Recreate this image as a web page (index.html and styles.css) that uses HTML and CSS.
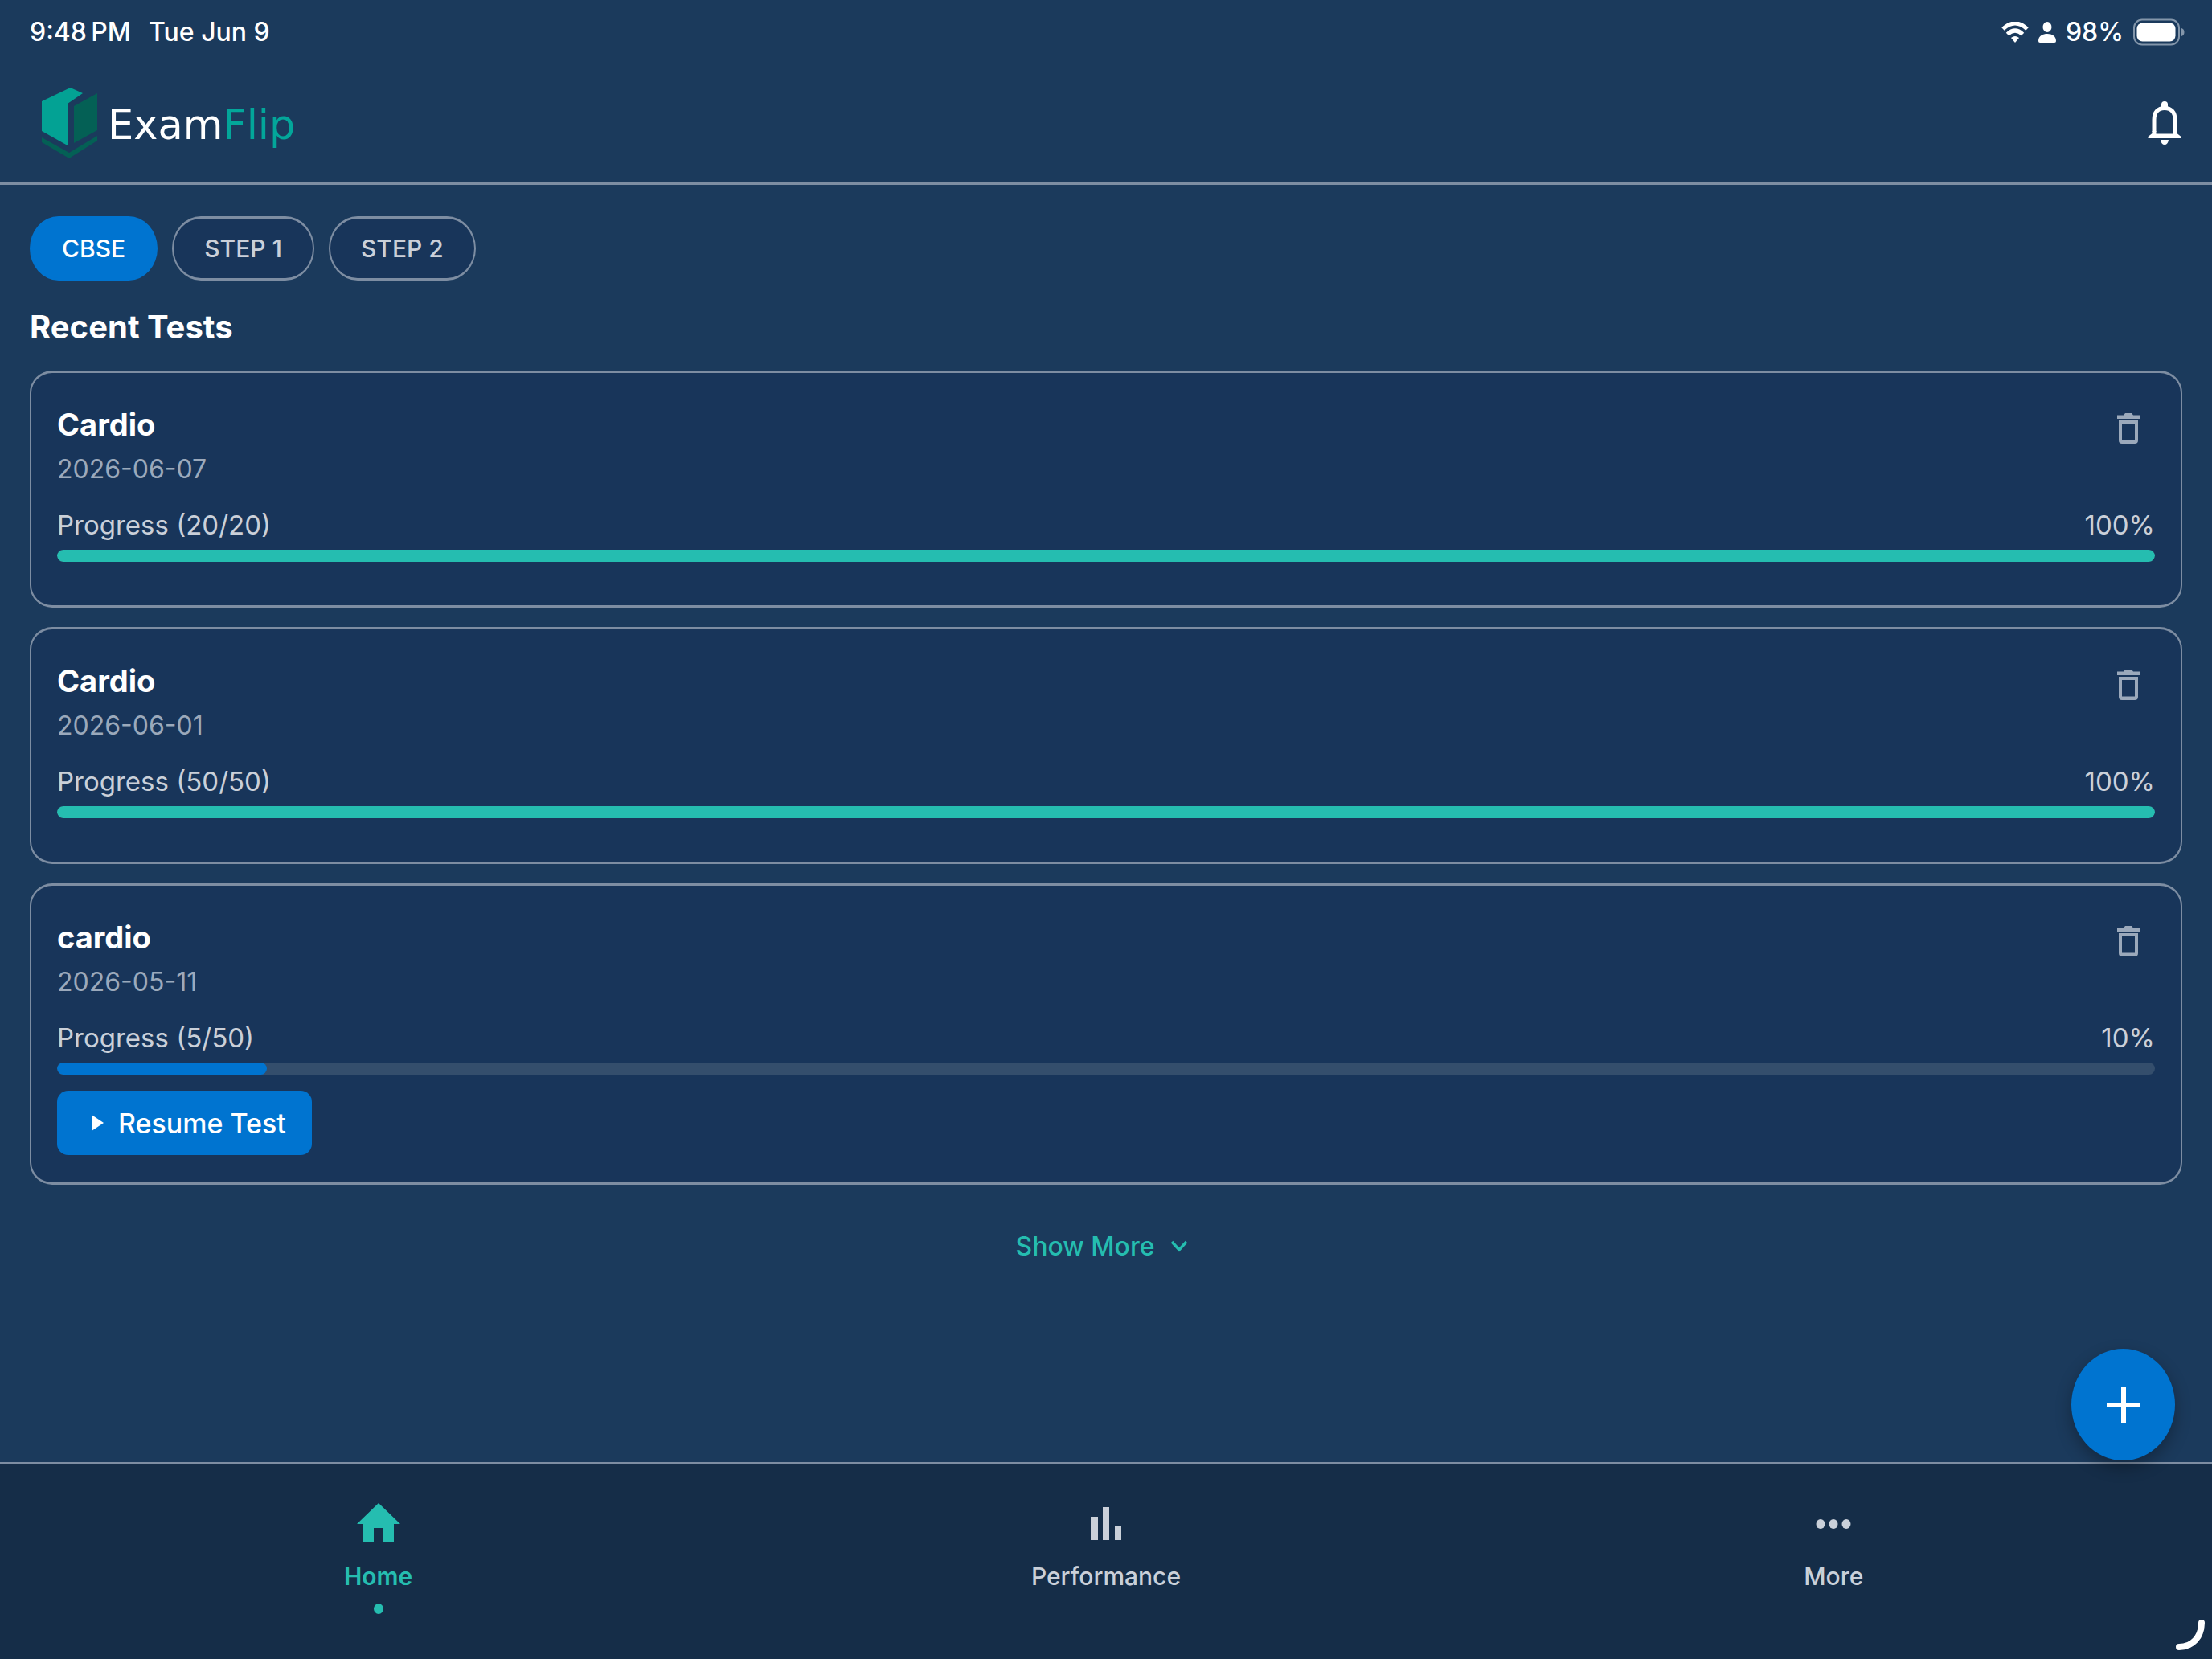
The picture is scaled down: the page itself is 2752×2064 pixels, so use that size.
FILE: index.html
```html
<!DOCTYPE html>
<html lang="en">
<head>
    <meta charset="UTF-8">
    <meta name="viewport" content="width=device-width, initial-scale=1.0">
    <title>ExamFlip</title>
    <link rel="stylesheet" href="styles.css">
</head>
<body>
    <div class="status-bar">
        <div class="status-left">
            <span>9:48&#8198;PM</span>
            <span>Tue Jun 9</span>
        </div>
        <div class="status-right">
            <svg class="wifi" viewBox="0 0 34 26" aria-hidden="true">
                <path d="M2 9 Q17 -5 32 9" fill="none" stroke="#fff" stroke-width="5"/>
                <path d="M7.500 15.500 Q17 6.500 26.500 15.500" fill="none" stroke="#fff" stroke-width="5"/>
                <path d="M12 20 Q17 16 22 20 L17 26 Z" fill="#fff"/>
            </svg>
            <svg class="person" viewBox="0 0 22 26" aria-hidden="true">
                <ellipse cx="11" cy="6.500" rx="5.500" ry="6.500" fill="#fff"/>
                <path d="M0 24 C0 18 5 15 11 15 C17 15 22 18 22 24 Q22 26 20 26 H2 Q0 26 0 24 Z" fill="#fff"/>
            </svg>
            <span>98%</span>
            <svg class="battery" viewBox="0 0 64 34" aria-hidden="true">
                <rect x="1" y="1.500" width="56" height="31" rx="10" fill="none" stroke="#8496aa" stroke-width="2"/>
                <rect x="4.500" y="5.500" width="48" height="23" rx="7" fill="#fff"/>
                <path d="M60 12 Q63.500 13 63.500 17 Q63.500 21 60 22 Z" fill="#8496aa"/>
            </svg>
        </div>
    </div>

    <header class="header">
        <a class="logo" href="#">
            <svg class="logo-mark" viewBox="0 0 70 88" aria-hidden="true">
                <path d="M0 17 L35.500 0 L51 7 L32 20 V72 L0 54 Z" fill="#03a294"/>
                <path d="M40 23 L69 7 V53 L40 69 Z" fill="#046055"/>
                <path d="M0 62 L34 81 L69 60 V66 L34 88 L0 68 Z" fill="#046055"/>
            </svg>
            <span class="logo-text">Exam<span class="logo-accent">Flip</span></span>
        </a>
        <button class="icon-button" type="button" aria-label="Notifications">
            <svg class="bell" viewBox="0 0 42 54" aria-hidden="true">
                <path d="M8 38 V23 C8 13 13 8.500 21 8.500 C29 8.500 34 13 34 23 V38" fill="none" stroke="#fff" stroke-width="5"/>
                <path d="M17 9 V4 Q17 0 21 0 Q25 0 25 4 V9 Z" fill="#fff"/>
                <path d="M5.500 37 V40 L0.500 44 V46 H41.500 V44 L36.500 40 V37 H31.500 V40.500 H10.500 V37 Z" fill="#fff"/>
                <path d="M16 48 H26 Q25 54 21 54 Q17 54 16 48 Z" fill="#fff"/>
            </svg>
        </button>
    </header>

    <main class="content">
        <div class="chips">
            <button class="chip chip-active" type="button">CBSE</button>
            <button class="chip" type="button">STEP 1</button>
            <button class="chip" type="button">STEP 2</button>
        </div>

        <h1>Recent Tests</h1>

        <div class="test-list">
            <article class="card">
                <div class="card-head">
                    <div>
                        <h2>Cardio</h2>
                        <p class="date">2026-06-07</p>
                    </div>
                    <button class="delete-button" type="button" aria-label="Delete Cardio">
                        <svg class="trash" viewBox="0 0 28 38" aria-hidden="true">
                            <path d="M0 2.500 H8 L10 0 H18 L20 2.500 H28 V7 H0 Z"/>
                            <path fill-rule="evenodd" d="M2 9 H26 V34 Q26 38 22 38 H6 Q2 38 2 34 Z M6 13 V33.500 H22 V13 Z"/>
                        </svg>
                    </button>
                </div>
                <div class="progress-row">
                    <span>Progress (20/20)</span>
                    <span>100%</span>
                </div>
                <div class="bar" role="progressbar" aria-label="Progress" aria-valuenow="100">
                    <div class="bar-fill bar-done" style="width: 100%"></div>
                </div>
            </article>

            <article class="card">
                <div class="card-head">
                    <div>
                        <h2>Cardio</h2>
                        <p class="date">2026-06-01</p>
                    </div>
                    <button class="delete-button" type="button" aria-label="Delete Cardio">
                        <svg class="trash" viewBox="0 0 28 38" aria-hidden="true">
                            <path d="M0 2.500 H8 L10 0 H18 L20 2.500 H28 V7 H0 Z"/>
                            <path fill-rule="evenodd" d="M2 9 H26 V34 Q26 38 22 38 H6 Q2 38 2 34 Z M6 13 V33.500 H22 V13 Z"/>
                        </svg>
                    </button>
                </div>
                <div class="progress-row">
                    <span>Progress (50/50)</span>
                    <span>100%</span>
                </div>
                <div class="bar" role="progressbar" aria-label="Progress" aria-valuenow="100">
                    <div class="bar-fill bar-done" style="width: 100%"></div>
                </div>
            </article>

            <article class="card">
                <div class="card-head">
                    <div>
                        <h2>cardio</h2>
                        <p class="date">2026-05-11</p>
                    </div>
                    <button class="delete-button" type="button" aria-label="Delete cardio">
                        <svg class="trash" viewBox="0 0 28 38" aria-hidden="true">
                            <path d="M0 2.500 H8 L10 0 H18 L20 2.500 H28 V7 H0 Z"/>
                            <path fill-rule="evenodd" d="M2 9 H26 V34 Q26 38 22 38 H6 Q2 38 2 34 Z M6 13 V33.500 H22 V13 Z"/>
                        </svg>
                    </button>
                </div>
                <div class="progress-row">
                    <span>Progress (5/50)</span>
                    <span>10%</span>
                </div>
                <div class="bar" role="progressbar" aria-label="Progress" aria-valuenow="10">
                    <div class="bar-fill" style="width: 10%"></div>
                </div>
                <button class="resume-button" type="button">
                    <svg class="play" viewBox="0 0 15 20" aria-hidden="true">
                        <path d="M0 0 L15 10 L0 20 Z" fill="#fff"/>
                    </svg>
                    Resume Test
                </button>
            </article>
        </div>

        <button class="show-more" type="button">
            Show More
            <svg class="chevron" viewBox="0 0 22 16" aria-hidden="true">
                <path d="M2 2 L11 12 L20 2" fill="none" stroke="#25bdb0" stroke-width="3.500"/>
            </svg>
        </button>
    </main>

    <div class="bottom">
        <button class="fab" type="button" aria-label="New test">
            <svg class="plus" viewBox="0 0 42 44" aria-hidden="true">
                <path d="M18 0 H24 V19 H42 V25 H24 V44 H18 V25 H0 V19 H18 Z" fill="#fff"/>
            </svg>
        </button>

        <nav class="tabs">
            <a class="tab tab-active" href="#">
                <svg class="tab-icon" viewBox="0 0 54 54" aria-hidden="true">
                    <path d="M27 2 L54 28 H46 V51 H33 V33 H21 V51 H8 V28 H0 Z"/>
                </svg>
                <span>Home</span>
            </a>
            <a class="tab" href="#">
                <svg class="tab-icon" viewBox="0 0 54 54" aria-hidden="true">
                    <path d="M8 19 H17 V48 H8 Z M23 7 H31 V48 H23 Z M38 30 H46 V48 H38 Z"/>
                </svg>
                <span>Performance</span>
            </a>
            <a class="tab" href="#">
                <svg class="tab-icon" viewBox="0 0 54 54" aria-hidden="true">
                    <ellipse cx="11" cy="28" rx="5.500" ry="6"/>
                    <ellipse cx="27" cy="28" rx="5.500" ry="6"/>
                    <ellipse cx="43" cy="28" rx="5.500" ry="6"/>
                </svg>
                <span>More</span>
            </a>
        </nav>

        <svg class="corner" viewBox="0 0 38 40" aria-hidden="true">
            <path d="M33 5 C33 22 22 35 5 35" fill="none" stroke="#fff" stroke-width="8" stroke-linecap="round"/>
        </svg>
    </div>
</body>
</html>
```
FILE: styles.css
```css
:root {
    --background: #1b3a5c;
    --card-bg: #18355a;
    --nav-bg: #152d48;
    --border: #7d8da2;
    --primary: #0074d0;
    --accent: #25bdb0;
    --text: #ffffff;
    --text-secondary: #cad0d9;
    --text-muted: #9ba9bb;
}

* {
    margin: 0;
    padding: 0;
    box-sizing: border-box;
}

body {
    display: flex;
    flex-direction: column;
    min-height: 100vh;
    font-family: 'Inter', 'Liberation Sans', sans-serif;
    font-size: 32px;
    background-color: var(--background);
    color: var(--text);
}

button {
    border: none;
    background: none;
    color: inherit;
    font-family: inherit;
    cursor: pointer;
}

a {
    color: inherit;
    text-decoration: none;
}

.status-bar {
    display: flex;
    justify-content: space-between;
    align-items: center;
    height: 79px;
    padding: 0 34px 0 37px;
    font-weight: 500;
}

.status-left {
    display: flex;
    gap: 22px;
}

.status-right {
    display: flex;
    align-items: center;
    gap: 12px;
}

.wifi {
    width: 34px;
    height: 26px;
}

.person {
    width: 22px;
    height: 26px;
}

.battery {
    width: 64px;
    height: 34px;
}

.header {
    display: flex;
    justify-content: space-between;
    align-items: center;
    padding: 30px 28px 30px 30px;
    border-bottom: 3px solid var(--border);
}

.logo {
    display: flex;
    align-items: center;
    gap: 12px;
    padding-left: 22px;
}

.logo-mark {
    width: 70px;
    height: 88px;
}

.logo-text {
    padding-top: 6px;
    font-family: 'DejaVu Sans', sans-serif;
    font-size: 51px;
    line-height: 60px;
}

.logo-accent {
    color: #03a69a;
}

.icon-button {
    display: flex;
    padding: 10px;
}

.bell {
    width: 42px;
    height: 54px;
}

.content {
    flex: 1;
    display: flex;
    flex-direction: column;
    padding: 39px 37px;
}

.chips {
    display: flex;
    gap: 18px;
}

.chip {
    height: 80px;
    padding: 0 38px;
    border: solid var(--border);
    border-width: 3px 2px;
    border-radius: 36px / 40px;
    background-color: var(--card-bg);
    color: var(--text-secondary);
    font-size: 30px;
    font-weight: 500;
}

.chip-active {
    border-color: var(--primary);
    background-color: var(--primary);
    color: var(--text);
}

h1 {
    margin: 30px 0 26px;
    font-size: 40px;
    font-weight: 700;
    line-height: 56px;
}

.test-list {
    display: flex;
    flex-direction: column;
    gap: 24px;
}

.card {
    padding: 34px 32px;
    border: solid var(--border);
    border-width: 3px 2px;
    border-radius: 28px;
    background-color: var(--card-bg);
}

.card-head {
    display: flex;
    justify-content: space-between;
    align-items: flex-start;
    margin-bottom: 20px;
}

h2 {
    font-size: 38px;
    font-weight: 700;
    line-height: 60px;
}

.date {
    color: var(--text-muted);
    font-size: 32px;
    line-height: 52px;
}

.delete-button {
    display: flex;
    padding: 16px 19px;
}

.trash {
    width: 28px;
    height: 38px;
    fill: var(--text-muted);
}

.progress-row {
    display: flex;
    justify-content: space-between;
    margin-bottom: 8px;
    color: var(--text-secondary);
    font-size: 33px;
    line-height: 46px;
}

.bar {
    height: 15px;
    margin-bottom: 20px;
    border-radius: 8px;
    background-color: #344e6c;
    overflow: hidden;
}

.bar-fill {
    height: 100%;
    border-radius: 8px;
    background-color: var(--primary);
}

.bar-done {
    background-color: var(--accent);
}

.resume-button {
    display: flex;
    align-items: center;
    gap: 18px;
    height: 80px;
    padding: 0 32px 0 43px;
    border-radius: 14px;
    background-color: var(--primary);
    font-size: 34px;
    font-weight: 500;
}

.play {
    width: 15px;
    height: 20px;
}

.show-more {
    display: flex;
    align-items: center;
    align-self: center;
    gap: 20px;
    margin-top: 37px;
    padding: 0 24px 0 14px;
    color: var(--accent);
    font-size: 32px;
    font-weight: 500;
    line-height: 80px;
}

.chevron {
    width: 22px;
    height: 16px;
}

.bottom {
    position: relative;
    border-top: 3px solid var(--border);
    background-color: var(--nav-bg);
}

/* floats over the page, just above the tabs */
.fab {
    position: absolute;
    right: 46px;
    bottom: 247px;
    display: flex;
    justify-content: center;
    align-items: center;
    width: 129px;
    height: 139px;
    border-radius: 50%;
    background-color: var(--primary);
    box-shadow: 0 8px 20px rgba(0, 0, 0, 0.3);
}

.plus {
    width: 42px;
    height: 44px;
}

.tabs {
    display: flex;
    padding: 46px 18px 56px;
}

.tab {
    flex: 1;
    display: flex;
    flex-direction: column;
    align-items: center;
    gap: 12px;
    color: var(--text-secondary);
    font-size: 30px;
    font-weight: 500;
    line-height: 44px;
}

.tab-icon {
    width: 54px;
    height: 54px;
    margin-bottom: 5px;
    fill: currentColor;
}

.tab::after {
    content: '';
    width: 12px;
    height: 13px;
    border-radius: 50%;
}

.tab-active {
    color: var(--accent);
    font-weight: 600;
}

.tab-active::after {
    background-color: var(--accent);
}

.corner {
    position: absolute;
    right: 8px;
    bottom: 10px;
    width: 38px;
    height: 40px;
}
```
